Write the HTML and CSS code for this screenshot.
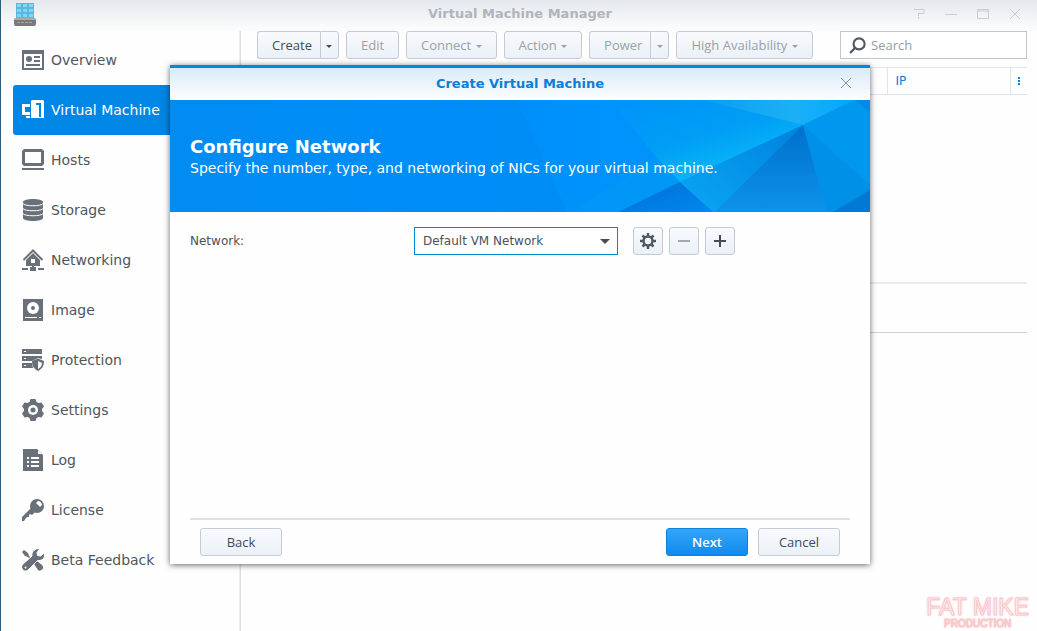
FILE: index.html
```html
<!DOCTYPE html>
<html lang="en">
<head>
  <meta charset="UTF-8">
  <meta name="viewport" content="width=device-width, initial-scale=1">
  <title>Virtual Machine Manager</title>
  <link rel="stylesheet" href="styles.css">
</head>
<body>
  <div class="window">
    <header class="titlebar">
      <svg class="app-icon" viewBox="0 0 24 24" aria-hidden="true">
        <path fill="#58b8e4" d="M3 1h18v18H3z"/>
        <path fill="#84d4f4" d="M4 2h4v3H4zM10 2h4v3h-4zM16 2h4v3h-4zM4 7h4v3H4zM10 7h4v3h-4zM16 7h4v3h-4zM4 12h4v3H4zM10 12h4v3h-4zM16 12h4v3h-4z"/>
        <path fill="#77797c" d="M2 16h20l1 2v4l-1 2H2l-1-2v-4z"/>
        <path fill="#a9abad" d="M2 16h20l1 2H1z"/>
        <path fill="none" stroke="#a4a7a9" d="M4 20.500h16" stroke-dasharray="3 1"/>
      </svg>
      <h1>Virtual Machine Manager</h1>
      <div class="window-controls">
        <button type="button" aria-label="Help"><svg viewBox="0 0 12 12"><path d="M1 1.500h10v4H5.500v2.500M5.500 9v2"/></svg></button>
        <button type="button" aria-label="Minimize"><svg viewBox="0 0 12 12"><path d="M0 6.500h12"/></svg></button>
        <button type="button" aria-label="Maximize"><svg viewBox="0 0 12 12"><path d="M.5 1.500h11v9H.5zM1 3h10"/></svg></button>
        <button type="button" aria-label="Close"><svg viewBox="0 0 12 12"><path d="M1 1l10 10M11 1L1 11"/></svg></button>
      </div>
    </header>

    <div class="content">
      <nav class="sidebar">
        <a href="#overview">
          <svg viewBox="0 0 22 22"><path fill-rule="evenodd" d="M0 1h22v20H0zM2 5v14h18V5z"/><circle cx="7" cy="10" r="3"/><path d="M12 7h6v2h-6zM12 11h6v2h-6zM4 15h14v2H4z"/></svg>
          Overview
        </a>
        <a href="#vm" class="active">
          <svg viewBox="0 0 22 22"><path fill-rule="evenodd" d="M10 1h11l1 1v17H9V2zM14 4v2h3v12h2V4z"/><path d="M0 5h8v3H3v5h5v3H0zM4 17h4v2H4z"/></svg>
          Virtual Machine
        </a>
        <a href="#hosts">
          <svg viewBox="0 0 22 22"><path fill-rule="evenodd" d="M2 0h18l2 2v13l-2 2H2l-2-2V2zM3 3v11h16V3z"/><path d="M0 19h22v2H0z"/></svg>
          Hosts
        </a>
        <a href="#storage">
          <svg viewBox="0 0 22 22"><path d="M1 3c0-4 20-4 20 0v16c0 4-20 4-20 0z"/><path fill="none" stroke="#fff" d="M1 4.500c1 3 19 3 20 0M1 9.500c1 3 19 3 20 0M1 14.500c1 3 19 3 20 0"/></svg>
          Storage
        </a>
        <a href="#networking">
          <svg viewBox="0 0 22 22"><path fill="none" stroke="#697079" stroke-width="2" d="M1.500 11L11 1.500 20.500 11"/><path fill-rule="evenodd" d="M4 11l7-7 7 7v6H4zM9 10v4h4v-4z"/><path d="M0 19h6v2H0zM8 18h6v4H8zM16 19h6v2h-6zM10 16h2v3h-2z"/></svg>
          Networking
        </a>
        <a href="#image">
          <svg viewBox="0 0 22 22"><path d="M1 0h20v22H1z"/><circle cx="11" cy="9" r="6" fill="#fff"/><circle cx="11" cy="9" r="2"/><path fill="#fff" d="M3 18h12v1H3zM17 18h2v1h-2z"/></svg>
          Image
        </a>
        <a href="#protection">
          <svg viewBox="0 0 22 22"><path d="M0 0h20v5H0zM0 7h20v3l-4-1-6 3H0zM0 14h10l1 5H0z"/><path fill="#fff" d="M2 2h2v1H2zM2 9h2v1H2zM2 16h2v1H2z"/><path fill-rule="evenodd" d="M16 9.500l6 2.500c0 5-2 8-6 10-4-2-6-5-6-10zM16 12v8c2-1 4-3 4-6z"/></svg>
          Protection
        </a>
        <a href="#settings">
          <svg viewBox="0 0 22 22"><path d="M8.500 0h5l1 3 2 1 3-.6 2.500 4.200-2 2.400v2l2 2.400-2.500 4.200-3-.6-2 1-1 3h-5l-1-3-2-1-3 .6L0 14.400 2 12v-2L0 7.600l2.500-4.200 3 .6 2-1z"/><circle cx="11" cy="11" r="5" fill="#fff"/><circle cx="11" cy="11" r="2.500"/></svg>
          Settings
        </a>
        <a href="#log">
          <svg viewBox="0 0 22 22"><path d="M1 0h14l6 6v16H1z"/><path fill="#fff" d="M16 1l4 4h-4zM5 8h2v2H5zM9 8h8v2H9zM5 12h2v2H5zM9 12h8v2H9zM5 16h2v2H5zM9 16h8v2H9z"/></svg>
          Log
        </a>
        <a href="#license">
          <svg viewBox="0 0 22 22"><circle cx="15" cy="7" r="7"/><path d="M9 9l4 4-3 3-2-1-1 1v2H5l-1 1-2 3H0v-4z"/><path fill="#fff" d="M14 4l2-2c2 0 4 2 4 4l-2 2z"/></svg>
          License
        </a>
        <a href="#beta">
          <svg viewBox="0 0 22 22">
            <path d="M0 3l2-2 4 3 1 3 4 4-1 1-4-4-3-1z"/>
            <path d="M12 15l3-3 5 4c2 2 1 5-1 5-1 1-2 1-3 0z"/>
            <path stroke="#fff" d="M18-.5l-3 4 .5 3 3 .5 4-3c1 5-2 8-7 7.500L6 21c-3 3-8-1-6-5l10-9C9 3 13-1 18-.5z"/>
            <circle cx="3.500" cy="18.500" r="1" fill="#fff"/>
          </svg>
          Beta Feedback
        </a>
      </nav>

      <main class="main">
        <div class="toolbar">
          <div class="split">
            <button type="button" class="btn">Create</button>
            <button type="button" class="btn toggle" aria-label="More create options"><span class="caret"></span></button>
          </div>
          <button type="button" class="btn" disabled>Edit</button>
          <button type="button" class="btn" disabled>Connect <span class="caret"></span></button>
          <button type="button" class="btn" disabled>Action <span class="caret"></span></button>
          <div class="split">
            <button type="button" class="btn" disabled>Power</button>
            <button type="button" class="btn toggle" disabled aria-label="More power options"><span class="caret"></span></button>
          </div>
          <button type="button" class="btn" disabled>High Availability <span class="caret"></span></button>
          <label class="search">
            <svg viewBox="0 0 16 16" aria-hidden="true"><circle cx="9.500" cy="6.500" r="5.200"/><path d="M6 10l-5 5"/></svg>
            <input type="search" placeholder="Search" aria-label="Search">
          </label>
        </div>
        <table class="vm-table">
          <thead>
            <tr>
              <th></th>
              <th class="col-ip">IP</th>
              <th class="col-menu"><button type="button" aria-label="Columns"><svg viewBox="0 0 2 8"><path d="M0 0h2v2H0zM0 3h2v2H0zM0 6h2v2H0z"/></svg></button></th>
            </tr>
          </thead>
        </table>
        <section class="details"></section>
      </main>
    </div>

    <div class="watermark">
      <span class="mark-name">FAT MIKE</span>
      <span class="mark-sub">PRODUCTION</span>
    </div>
  </div>

  <div class="overlay">
    <div class="dialog" role="dialog" aria-labelledby="dialog-title">
      <div class="dialog-head">
        <h2 id="dialog-title">Create Virtual Machine</h2>
        <button type="button" aria-label="Close dialog"><svg viewBox="0 0 12 12"><path d="M1 1l10 10M11 1L1 11"/></svg></button>
      </div>
      <div class="banner">
        <svg class="banner-art" viewBox="0 0 700 112" preserveAspectRatio="xMaxYMid slice" aria-hidden="true">
          <defs>
            <linearGradient id="base"><stop offset="0" stop-color="#008cf2"/><stop offset=".4" stop-color="#008df8"/><stop offset=".6" stop-color="#0092fc"/><stop offset="1" stop-color="#0096f2"/></linearGradient>
            <linearGradient id="cyan" x1="0" y1="0" x2=".7" y2="1"><stop offset="0" stop-color="#0093fb"/><stop offset=".5" stop-color="#009df5"/><stop offset="1" stop-color="#0cc0f8"/></linearGradient>
            <linearGradient id="top"><stop offset="0" stop-color="#0a9cf0"/><stop offset=".6" stop-color="#1cb0f6"/><stop offset="1" stop-color="#00a6ff"/></linearGradient>
            <linearGradient id="deep" x1="0" y1="0" x2="0" y2="1"><stop offset="0" stop-color="#0070cc"/><stop offset="1" stop-color="#0d92ea"/></linearGradient>
            <linearGradient id="low" x1="0" y1="0" x2="1" y2="1"><stop offset="0" stop-color="#006ed4"/><stop offset="1" stop-color="#0088ee"/></linearGradient>
            <linearGradient id="mid" x1="1" y1="0" x2="0" y2="1"><stop offset="0" stop-color="#0082de"/><stop offset="1" stop-color="#0aa6f4"/></linearGradient>
            <linearGradient id="shade"><stop offset="0" stop-color="#0088ee" stop-opacity="0"/><stop offset="1" stop-color="#0088ee" stop-opacity=".5"/></linearGradient>
          </defs>
          <path fill="url(#base)" d="M0 0h700v112H0z"/>
          <path fill="url(#shade)" d="M200 0h147l50 112H200z"/>
          <path fill="url(#cyan)" d="M440 0h92l101 25-123 57-23-24z"/>
          <path fill="#009cf4" fill-opacity=".5" d="M487 58l23 24-62 30h-48z"/>
          <path fill="url(#top)" d="M532 0h153l-52 25z"/>
          <path fill="url(#low)" d="M510 82l33 30h-95z"/>
          <path fill="url(#mid)" d="M633 25l-88 87h-2l-33-30z"/>
          <path fill="url(#deep)" d="M633 25l24 87H545z"/>
          <path fill="#0090e8" d="M633 25l67 60v27h-43z"/>
          <path fill="#0097ef" d="M633 25l52-25h15v85z"/>
          <path fill="#008ce6" d="M685 0h15v12z"/>
          <path fill="#0079d4" d="M663 112l37-22v22z"/>
        </svg>
        <h3>Configure Network</h3>
        <p>Specify the number, type, and networking of NICs for your virtual machine.</p>
      </div>
      <form class="dialog-form" id="network-form">
        <label for="network">Network:</label>
        <div class="select">
          <select id="network">
            <option>Default VM Network</option>
          </select>
        </div>
        <div class="tools">
          <button type="button" class="btn tool" aria-label="Network settings"><svg viewBox="0 0 16 16"><circle cx="8" cy="8" r="4.500" fill="none" stroke="#505862" stroke-width="2.500"/><path stroke="#505862" stroke-width="2.500" d="M8 0v3M8 13v3M0 8h3M13 8h3M2.500 2.500l2 2M11.500 11.500l2 2M2.500 13.500l2-2M11.500 4.500l2-2"/></svg></button>
          <button type="button" class="btn tool" disabled aria-label="Remove network"><svg viewBox="0 0 16 16"><path stroke="#a4a9af" stroke-width="2" d="M2 8h12"/></svg></button>
          <button type="button" class="btn tool" aria-label="Add network"><svg viewBox="0 0 16 16"><path stroke="#454d55" stroke-width="2" d="M2 8h12M8 2v12"/></svg></button>
        </div>
      </form>
      <div class="dialog-foot">
        <button type="button" class="btn wide">Back</button>
        <button type="submit" form="network-form" class="btn wide primary">Next</button>
        <button type="button" class="btn wide">Cancel</button>
      </div>
    </div>
  </div>
</body>
</html>
```
FILE: styles.css
```css
* {
  box-sizing: border-box;
}

body {
  margin: 0;
  font-family: Verdana, "DejaVu Sans", sans-serif;
  font-size: 12px;
  color: #4b5157;
  background: #fefefe;
}

h1, h2, h3, p {
  margin: 0;
}

button {
  font: inherit;
  cursor: pointer;
}

/* Window */
.window {
  position: relative;
  display: flex;
  flex-direction: column;
  min-height: 100vh;
  border-left: 1px solid #2c5a78;
  background: linear-gradient(#e4e8ed, #fefefe 32px);
}

.titlebar {
  display: flex;
  align-items: center;
  height: 28px;
  padding: 0 16px 0 12px;
}

.app-icon {
  width: 24px;
  height: 24px;
}

h1 {
  flex: 1;
  padding-left: 90px;
  font-size: 13px;
  line-height: 28px;
  text-align: center;
  color: #b0b5bc;
}

.window-controls {
  display: flex;
  gap: 20px;
}

.window-controls button, .dialog-head button {
  display: block;
  width: 12px;
  height: 12px;
  padding: 0;
  border: 0;
  background: none;
}

.window-controls svg, .dialog-head svg {
  display: block;
  fill: none;
  stroke: #c9cdd1;
  stroke-width: 1;
}

.content {
  flex: 1;
  display: flex;
}

/* Sidebar */
.sidebar {
  width: 239px;
  flex-shrink: 0;
  padding: 7px 0 0 12px;
}

.sidebar a {
  display: flex;
  align-items: center;
  gap: 7px;
  height: 50px;
  padding-left: 9px;
  border-radius: 3px;
  font-size: 14px;
  color: #4f565d;
  text-decoration: none;
}

.sidebar svg {
  width: 22px;
  height: 22px;
  fill: #697079;
}

.sidebar .active {
  background: #0086e5;
  color: #fff;
}

.sidebar .active svg {
  fill: #fff;
}

/* Main area */
.main {
  flex: 1;
  margin-top: 3px;
  padding: 0 10px 0 16px;
  border-left: 1px solid #dcdee0;
  box-shadow: -1px 0 1px #eeeff0;
}

.toolbar {
  display: flex;
  gap: 7px;
  margin-bottom: 8px;
}

.btn {
  height: 28px;
  padding: 0 14px;
  border: 1px solid #c3ccd6;
  border-radius: 3px;
  background: linear-gradient(#f8fafd, #ebf1f7);
  font-family: "Open Sans", "Noto Sans", sans-serif;
  font-size: 13px;
  color: #414b55;
  white-space: nowrap;
}

.btn:disabled {
  color: #9ba1a8;
  cursor: default;
}

.split {
  display: flex;
}

.split .btn:first-child {
  padding-right: 8px;
  border-right: 0;
  border-radius: 3px 0 0 3px;
}

.split .toggle {
  width: 19px;
  padding: 0;
  border-radius: 0 3px 3px 0;
}

.caret {
  display: inline-block;
  margin-left: 1px;
  border: 3px solid transparent;
  border-top-color: currentColor;
  border-bottom: 0;
  vertical-align: middle;
}

.toggle .caret {
  margin: 0;
}

.search {
  display: flex;
  align-items: center;
  gap: 5px;
  width: 187px;
  height: 28px;
  margin-left: auto;
  padding: 0 8px;
  border: 1px solid #bcc7d1;
  background: #fff;
}

.search svg {
  width: 17px;
  height: 17px;
  flex-shrink: 0;
  fill: none;
  stroke: #505760;
  stroke-width: 2;
}

.search input {
  width: 100%;
  min-width: 0;
  padding: 0;
  border: 0;
  outline: 0;
  background: none;
  font-family: "Open Sans", "Noto Sans", sans-serif;
  font-size: 13px;
}

.search input::placeholder {
  color: #959ba2;
}

.vm-table {
  width: 100%;
  border-collapse: collapse;
  table-layout: fixed;
}

.vm-table th {
  height: 27px;
  padding: 0 8px;
  border: 1px solid #dfe5eb;
  border-left: 0;
  font-size: 12px;
  font-weight: normal;
  text-align: left;
  color: #0080dc;
}

.vm-table .col-ip {
  width: 123px;
}

.vm-table .col-menu {
  width: 17px;
  padding: 0;
  border-right: 0;
}

.col-menu button {
  display: block;
  margin: 0 auto;
  padding: 0;
  border: 0;
  background: none;
}

.col-menu svg {
  display: block;
  width: 2px;
  height: 8px;
  fill: #0080dc;
}

.details {
  height: 51px;
  margin-top: 187px;
  border-top: 2px solid #ececed;
  border-bottom: 1px solid #cfd1d3;
}

.watermark {
  position: absolute;
  right: 8px;
  bottom: 2px;
  display: flex;
  flex-direction: column;
  align-items: center;
  font-family: "Liberation Sans", Arial, sans-serif;
  color: #fff6f6;
  text-shadow: 0 0 3px #ffc4c4;
  -webkit-text-stroke: 1px #f9c6c9;
}

.mark-name {
  font-size: 23px;
  line-height: 22px;
}

.mark-sub {
  font-size: 10px;
  line-height: 11px;
}

/* Dialog */
.overlay {
  position: absolute;
  top: 65px;
  left: 3px;
  right: 0;
  display: flex;
  justify-content: center;
}

.dialog {
  display: flex;
  flex-direction: column;
  width: 700px;
  min-height: 499px;
  border-top: 3px solid #0086e5;
  background: #fefefe;
  box-shadow: 0 1px 6px rgba(0, 0, 0, 0.6);
}

.dialog-head {
  display: flex;
  align-items: center;
  height: 32px;
  padding: 0 18px 2px;
  background: linear-gradient(#d9ebf9, #fdfeff);
}

.dialog-head h2 {
  flex: 1;
  padding-left: 12px;
  font-size: 13px;
  text-align: center;
  color: #0a7ed6;
}

.dialog-head svg {
  stroke: #8d96a0;
}

.banner {
  position: relative;
  height: 112px;
  padding: 36px 20px;
  background: #008df5;
  color: #fff;
}

.banner-art {
  position: absolute;
  inset: 0;
  width: 100%;
  height: 100%;
}

.banner h3 {
  position: relative;
  font-size: 18px;
  line-height: 22px;
}

.banner p {
  position: relative;
  font-size: 14px;
  line-height: 20px;
}

.dialog-form {
  display: flex;
  align-items: center;
  padding: 15px 20px;
}

.dialog-form label {
  width: 224px;
}

.select {
  position: relative;
  width: 204px;
}

.select::after {
  content: "";
  position: absolute;
  top: 12px;
  right: 8px;
  border: 5px solid transparent;
  border-top-color: #454d55;
  border-bottom: 0;
  pointer-events: none;
}

.select select {
  width: 100%;
  height: 28px;
  padding: 0 8px;
  appearance: none;
  border: 1px solid #0086cf;
  border-radius: 0;
  background: #fff;
  font: inherit;
  color: #4b5157;
}

.tools {
  display: flex;
  gap: 6px;
  margin-left: 15px;
}

.tool {
  display: flex;
  align-items: center;
  justify-content: center;
  width: 30px;
  padding: 0;
}

.tool svg {
  width: 16px;
  height: 16px;
}

.dialog-foot {
  display: flex;
  gap: 10px;
  margin: auto 20px 0;
  padding: 8px 10px;
  border-top: 2px solid #dfe1e3;
}

.wide {
  width: 82px;
}

.wide:first-child {
  margin-right: auto;
}

.primary {
  border-color: #0a82dc;
  background: linear-gradient(#33a6fb, #1289ec);
  font-weight: 600;
  color: #fff;
}
```
